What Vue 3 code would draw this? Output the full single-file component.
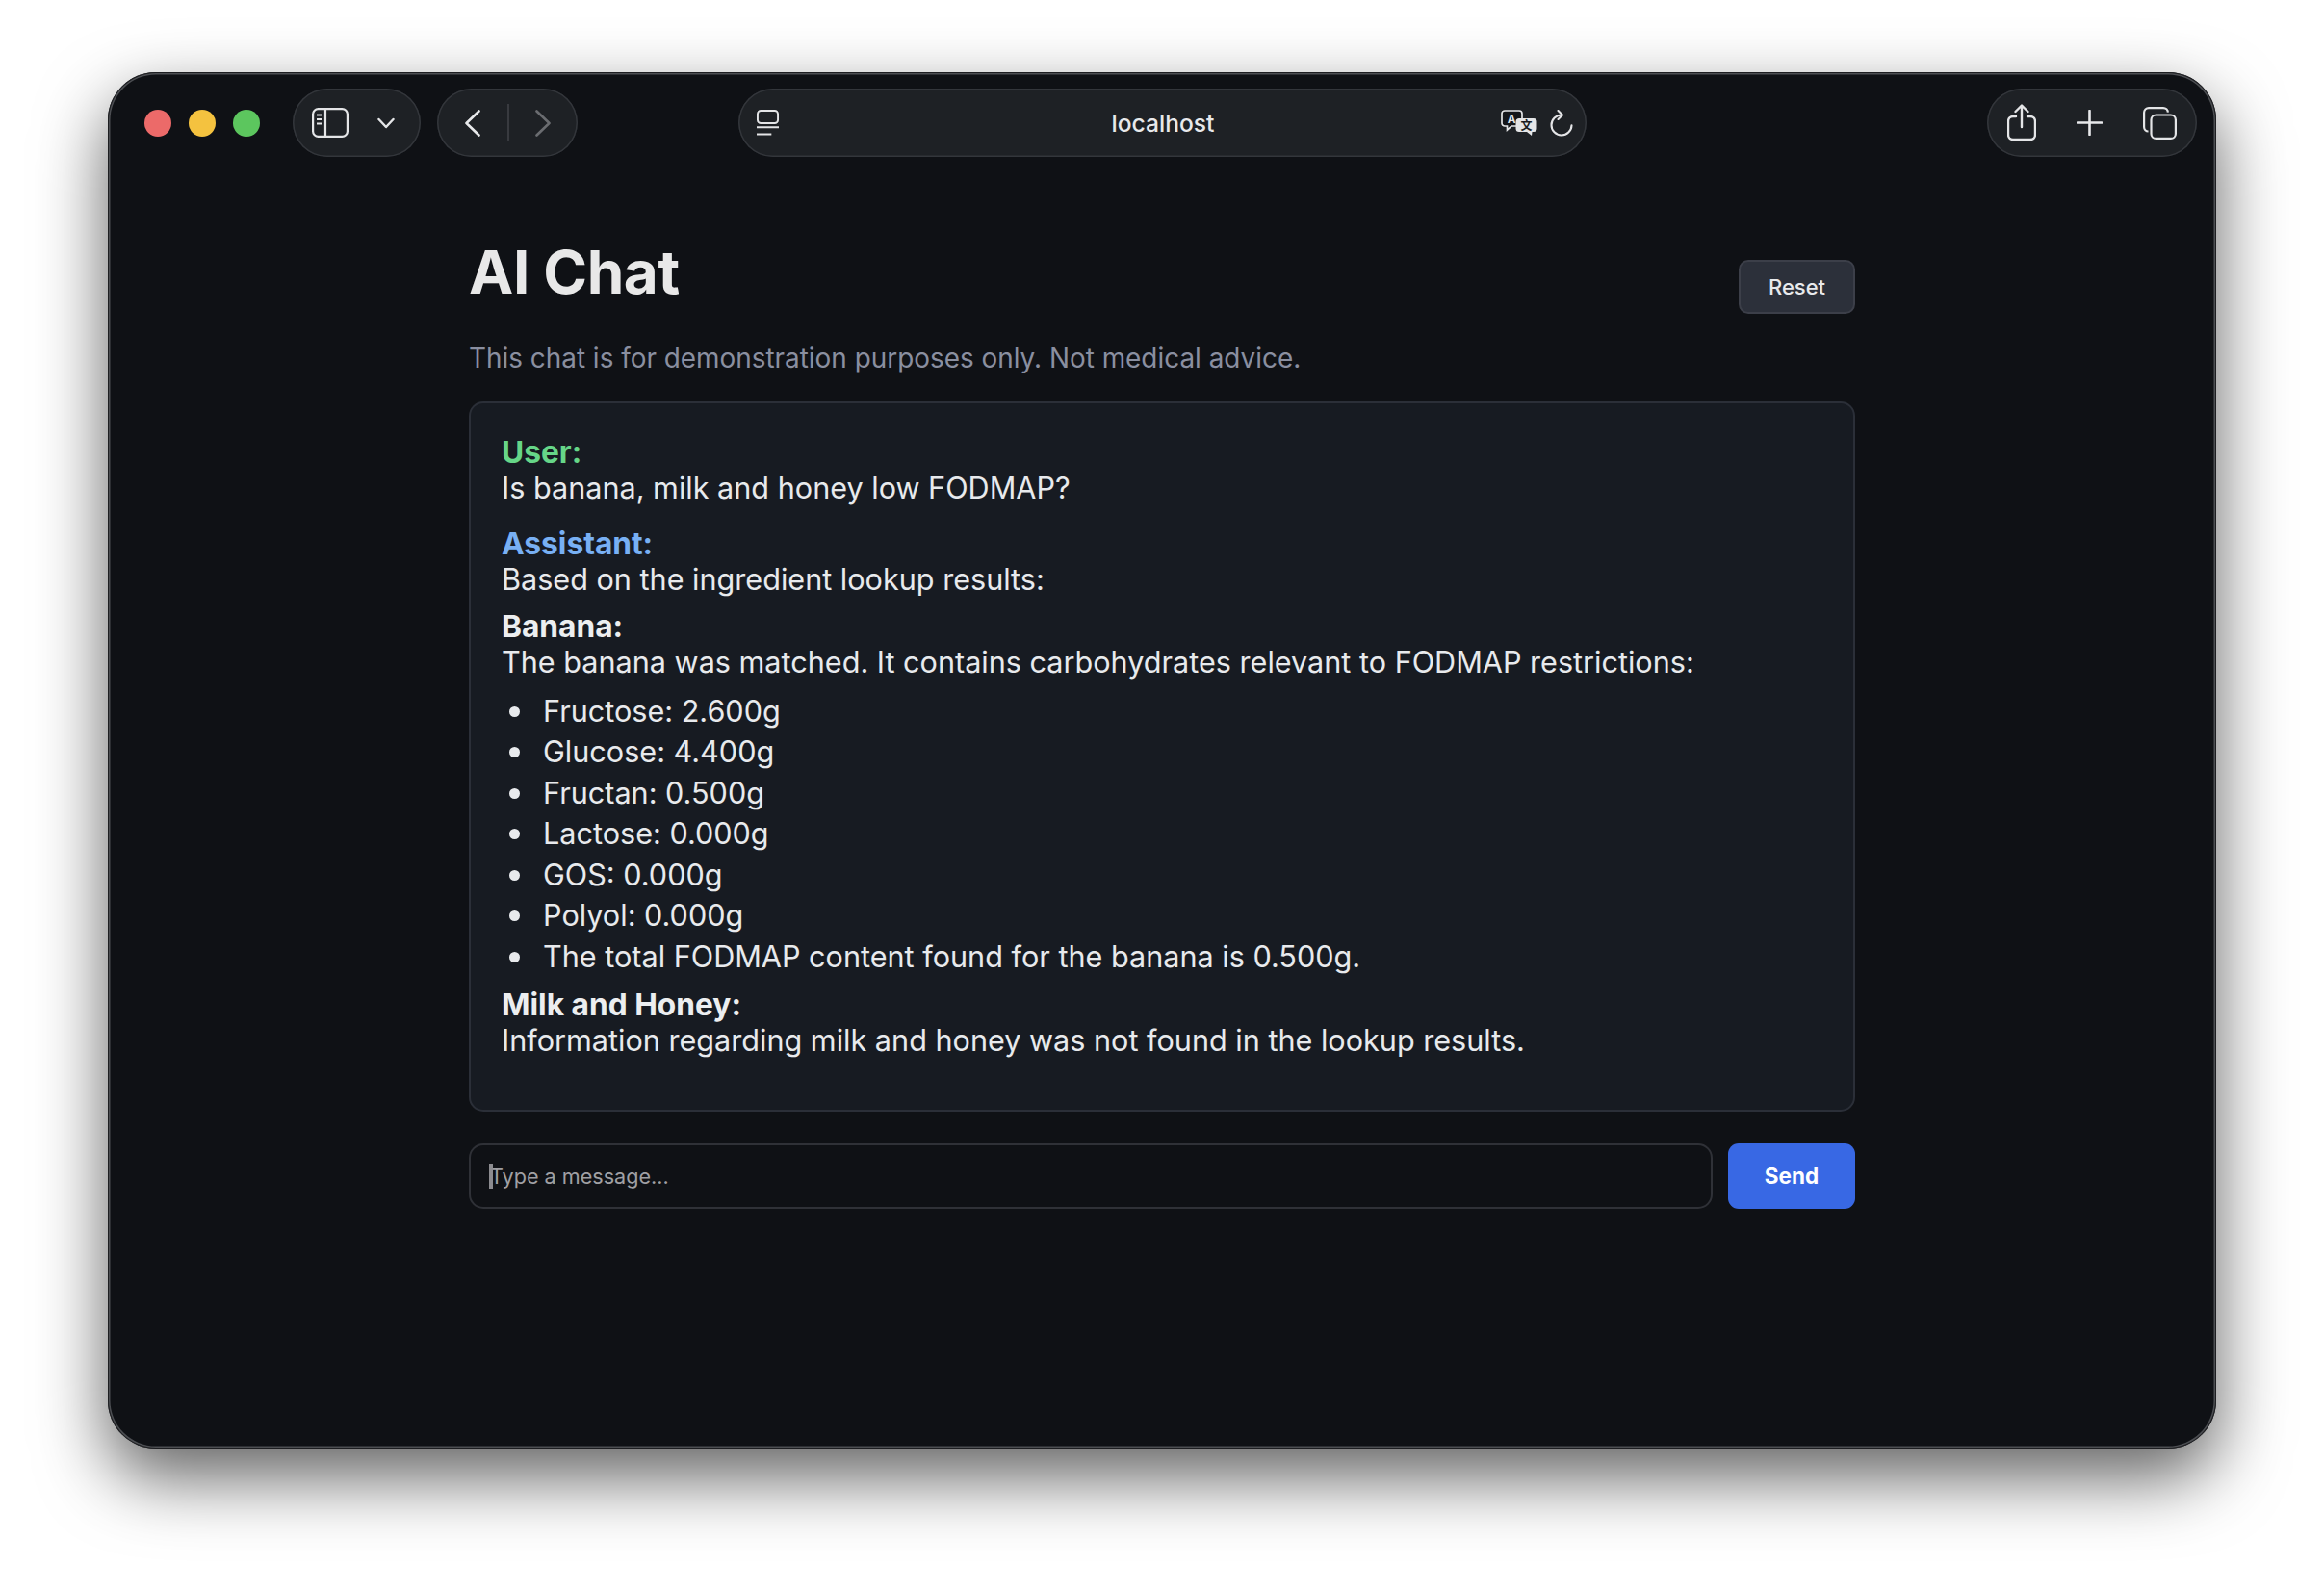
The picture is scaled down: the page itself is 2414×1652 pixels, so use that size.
<script setup>
const nutrients = [
  'Fructose: 2.600g',
  'Glucose: 4.400g',
  'Fructan: 0.500g',
  'Lactose: 0.000g',
  'GOS: 0.000g',
  'Polyol: 0.000g',
  'The total FODMAP content found for the banana is 0.500g.'
]
</script>

<template>
  <div class="stage">
    <div class="window">
      <header class="toolbar">
        <div class="tb-left">
          <div class="lights">
            <span class="light red"></span>
            <span class="light yellow"></span>
            <span class="light green"></span>
          </div>
          <div class="pill side-pill">
            <svg class="ic-side" viewBox="0 0 38 31" fill="none" stroke="#e4e5e7" stroke-width="2.2">
              <rect x="1.1" y="1.1" width="35.8" height="28.800" rx="5.500" />
              <path d="M14 1.100V29.900" />
              <path d="M5 7.500h5M5 12h5M5 16.500h5" stroke-width="1.800" />
            </svg>
            <svg class="ic-down" viewBox="0 0 18 12" fill="none" stroke="#e4e5e7" stroke-width="2.400" stroke-linecap="round" stroke-linejoin="round">
              <path d="M1.500 2 9 10l7.500-8" />
            </svg>
          </div>
          <div class="pill nav-pill">
            <svg class="ic-nav" viewBox="0 0 16 28" fill="none" stroke="#e8e9eb" stroke-width="2.600" stroke-linecap="round" stroke-linejoin="round">
              <path d="M14.500 1.500 1.500 14l13 12.500" />
            </svg>
            <span class="nav-div"></span>
            <svg class="ic-nav" viewBox="0 0 16 28" fill="none" stroke="#6a6c70" stroke-width="2.600" stroke-linecap="round" stroke-linejoin="round">
              <path d="M1.500 1.500 14.500 14 1.500 26.500" />
            </svg>
          </div>
        </div>

        <div class="pill url-pill">
          <svg class="ic-reader" viewBox="0 0 24 28" fill="none" stroke="#e4e5e7" stroke-width="2">
            <rect x="1" y="1" width="22" height="13.500" rx="3.500" />
            <path d="M0 19h24M0 26.500h16" />
          </svg>
          <span class="url-text">localhost</span>
          <svg class="ic-trans" viewBox="0 0 38 27">
            <path d="M4 1h15a3 3 0 0 1 3 3v10a3 3 0 0 1-3 3h-8l-4.500 4v-4H4a3 3 0 0 1-3-3V4a3 3 0 0 1 3-3z" fill="#14161a" stroke="#e4e5e7" stroke-width="1.700" />
            <text x="11" y="14" class="tr-a">A</text>
            <path d="M19 9h15a3.500 3.500 0 0 1 3.500 3.500v7a3.500 3.500 0 0 1-3.500 3.500h-1.500l-.5 4-5-4H19a3.500 3.500 0 0 1-3.500-3.500v-7A3.500 3.500 0 0 1 19 9z" fill="#e4e5e7" />
            <text x="26.500" y="20.500" class="tr-z">文</text>
          </svg>
          <svg class="ic-reload" viewBox="0 0 24 28" fill="none" stroke="#e4e5e7" stroke-width="2.100" stroke-linecap="round" stroke-linejoin="round">
            <path d="M12 5.500a10.500 10.500 0 1 0 10.500 10.800" />
            <path d="M8.500 1 13 5.500 8.500 10" />
          </svg>
        </div>

        <div class="tb-right">
          <div class="pill act-pill">
            <svg class="ic-share" viewBox="0 0 30 38" fill="none" stroke="#e4e5e7" stroke-width="2.400" stroke-linecap="round" stroke-linejoin="round">
              <path d="M9 13H6a5 5 0 0 0-5 5v14a5 5 0 0 0 5 5h18a5 5 0 0 0 5-5V18a5 5 0 0 0-5-5h-3" />
              <path d="M15 24V2M8.500 8 15 1.500 21.500 8" />
            </svg>
            <svg class="ic-plus" viewBox="0 0 27 27" fill="none" stroke="#e8e9eb" stroke-width="2.600" stroke-linecap="round">
              <path d="M13.500 1v25M1 13.500h25" />
            </svg>
            <svg class="ic-tabs" viewBox="0 0 35 34" fill="none" stroke="#e4e5e7" stroke-width="2.200">
              <path d="M5 25.500H5.500A4.500 4.500 0 0 1 1.100 21V6A4.900 4.900 0 0 1 6 1.100h15a4.900 4.900 0 0 1 4.900 4.500" />
              <rect x="8.500" y="8.500" width="25.400" height="24.400" rx="5" />
            </svg>
          </div>
        </div>
      </header>

      <main class="page">
        <div class="head">
          <h1 class="title">AI Chat</h1>
          <button class="reset" type="button">Reset</button>
        </div>
        <p class="sub">This chat is for demonstration purposes only. Not medical advice.</p>

        <section class="chat">
          <div class="msg">
            <strong class="who user">User:</strong>
            <div class="line">Is banana, milk and honey low FODMAP?</div>
          </div>
          <div class="msg">
            <strong class="who bot">Assistant:</strong>
            <div class="line">Based on the ingredient lookup results:</div>
            <div class="block">
              <strong class="hd">Banana:</strong>
              <div class="line">The banana was matched. It contains carbohydrates relevant to FODMAP restrictions:</div>
            </div>
            <ul class="list">
              <li v-for="n in nutrients" :key="n">{{ n }}</li>
            </ul>
            <div class="block">
              <strong class="hd">Milk and Honey:</strong>
              <div class="line">Information regarding milk and honey was not found in the lookup results.</div>
            </div>
          </div>
        </section>

        <form class="composer" @submit.prevent>
          <div class="field">
            <input class="input" type="text" placeholder="Type a message..." />
            <span class="caret"></span>
          </div>
          <button class="send" type="submit">Send</button>
        </form>
      </main>
    </div>
  </div>
</template>

<style>
html, body { margin: 0; background: #ffffff; }
</style>

<style scoped>
.stage {
  width: 2414px;
  height: 1652px;
  padding: 75px 112px 0;
  box-sizing: border-box;
  background: #ffffff;
  overflow: hidden;
  font-family: Inter, "Noto Sans", sans-serif;
}
.window {
  height: 1430px;
  border-radius: 50px;
  background: #0f1115;
  box-shadow:
    inset 0 0 0 1px #1d1e21,
    inset 0 0 0 2.500px #4c4e52,
    0 30px 72px rgba(0, 0, 0, 0.62);
  overflow: hidden;
  padding-top: 17px;
  box-sizing: border-box;
}
.toolbar {
  display: grid;
  grid-template-columns: 1fr 881px 1fr;
  align-items: center;
  padding: 0 20px 0 20px;
}
.tb-left { display: flex; align-items: center; padding-left: 18px; }
.tb-right { display: flex; justify-content: flex-end; }
.lights { display: flex; gap: 18px; margin-right: 34px; }
.light { width: 28px; height: 28px; border-radius: 50%; }
.red { background: #ec6a69; }
.yellow { background: #f4c23f; }
.green { background: #5cc65e; }
.pill {
  height: 71px;
  border-radius: 36px;
  background: #1e2125;
  box-shadow: inset 0 0 0 1.500px #33363b;
  display: flex;
  align-items: center;
  box-sizing: border-box;
  flex: none;
}
.side-pill { width: 133px; padding-left: 20px; margin-right: 17px; }
.ic-side { width: 38px; height: 31px; }
.ic-down { width: 18px; height: 12px; margin-left: 30px; }
.nav-pill { width: 146px; padding-left: 29px; }
.ic-nav { width: 16px; height: 28px; }
.nav-div { width: 1.500px; height: 39px; background: #383a3f; margin: 0 27px 0 28px; }
.url-pill { padding: 0 14px 0 19px; }
.ic-reader { width: 23px; height: 27px; flex: none; }
.url-text {
  flex: 1;
  text-align: center;
  font-size: 24.600px;
  font-weight: 500;
  color: #e8e9eb;
  padding-left: 49px;
}
.ic-trans { width: 38px; height: 27px; flex: none; }
.ic-reload { width: 24px; height: 28px; margin-left: 13px; flex: none; }
.tr-a {
  font-family: Inter, sans-serif;
  font-size: 12px;
  font-weight: 600;
  fill: #e4e5e7;
  text-anchor: middle;
}
.tr-z {
  font-family: "Noto Sans CJK SC", sans-serif;
  font-size: 12px;
  font-weight: 700;
  fill: #1a1c20;
  text-anchor: middle;
}
.act-pill { width: 218px; padding-left: 21px; }
.ic-share { width: 30px; height: 38px; margin-top: -2px; }
.ic-plus { width: 27px; height: 27px; margin-left: 42px; }
.ic-tabs { width: 35px; height: 34px; margin-left: 42px; }

.page {
  width: 1440px;
  margin: 0 auto;
}
.head {
  display: flex;
  justify-content: space-between;
  align-items: flex-start;
  margin-top: 82px;
}
.title {
  margin: 0;
  font-size: 62px;
  line-height: 76px;
  font-weight: 700;
  color: #e8e8e8;
  letter-spacing: -0.400px;
}
.reset {
  width: 121px;
  height: 56px;
  margin-top: 25px;
  border: 2px solid #3c3f49;
  border-radius: 10px;
  background: #2c303a;
  color: #e8eaed;
  font: 500 22px Inter, sans-serif;
  padding: 0;
}
.sub {
  margin: 23.500px 0 0;
  font-size: 27.900px;
  line-height: 44px;
  color: #8a8fa0;
}
.chat {
  margin-top: 23.500px;
  height: 737.500px;
  box-sizing: border-box;
  padding: 33px 32px;
  border: 2px solid #2b2f38;
  border-radius: 15px;
  background: #171b22;
  color: #e8eaed;
  font-size: 30.600px;
  line-height: 37px;
}
.msg { margin-bottom: 22px; }
.who { display: block; font-size: 31.700px; line-height: 36px; font-weight: 650; }
.user { color: #66d688; }
.bot { color: #78b0f4; }
.hd { display: block; font-size: 31.700px; line-height: 36px; font-weight: 650; color: #eceef0; }
.block { margin-top: 13px; }
.list {
  margin: 11.500px 0 0;
  padding-left: 43px;
  line-height: 42.500px;
  list-style: none;
}
.list li { position: relative; }
.list li::before {
  content: "";
  position: absolute;
  left: -35px;
  top: 16px;
  width: 11px;
  height: 11px;
  border-radius: 50%;
  background: #e8eaed;
}
.list + .block { margin-top: 10.500px; }
.composer {
  display: flex;
  gap: 16px;
  margin-top: 33px;
}
.field { flex: 1; position: relative; }
.input {
  display: block;
  width: 100%;
  height: 68px;
  box-sizing: border-box;
  padding: 0 20px;
  border: 2px solid #2f3137;
  border-radius: 15px;
  background: #0f1115;
  color: #e8eaed;
  font: 400 21.600px Inter, sans-serif;
  outline: none;
}
.input::placeholder { color: #a0a0a4; opacity: 1; }
.caret {
  position: absolute;
  left: 21px;
  top: 21px;
  width: 4px;
  height: 26px;
  background: #8c8c90;
}
.send {
  width: 132px;
  height: 68px;
  border: none;
  border-radius: 11px;
  background: #3868e4;
  color: #ffffff;
  font: 700 22.500px Inter, sans-serif;
  padding: 0;
}
</style>
